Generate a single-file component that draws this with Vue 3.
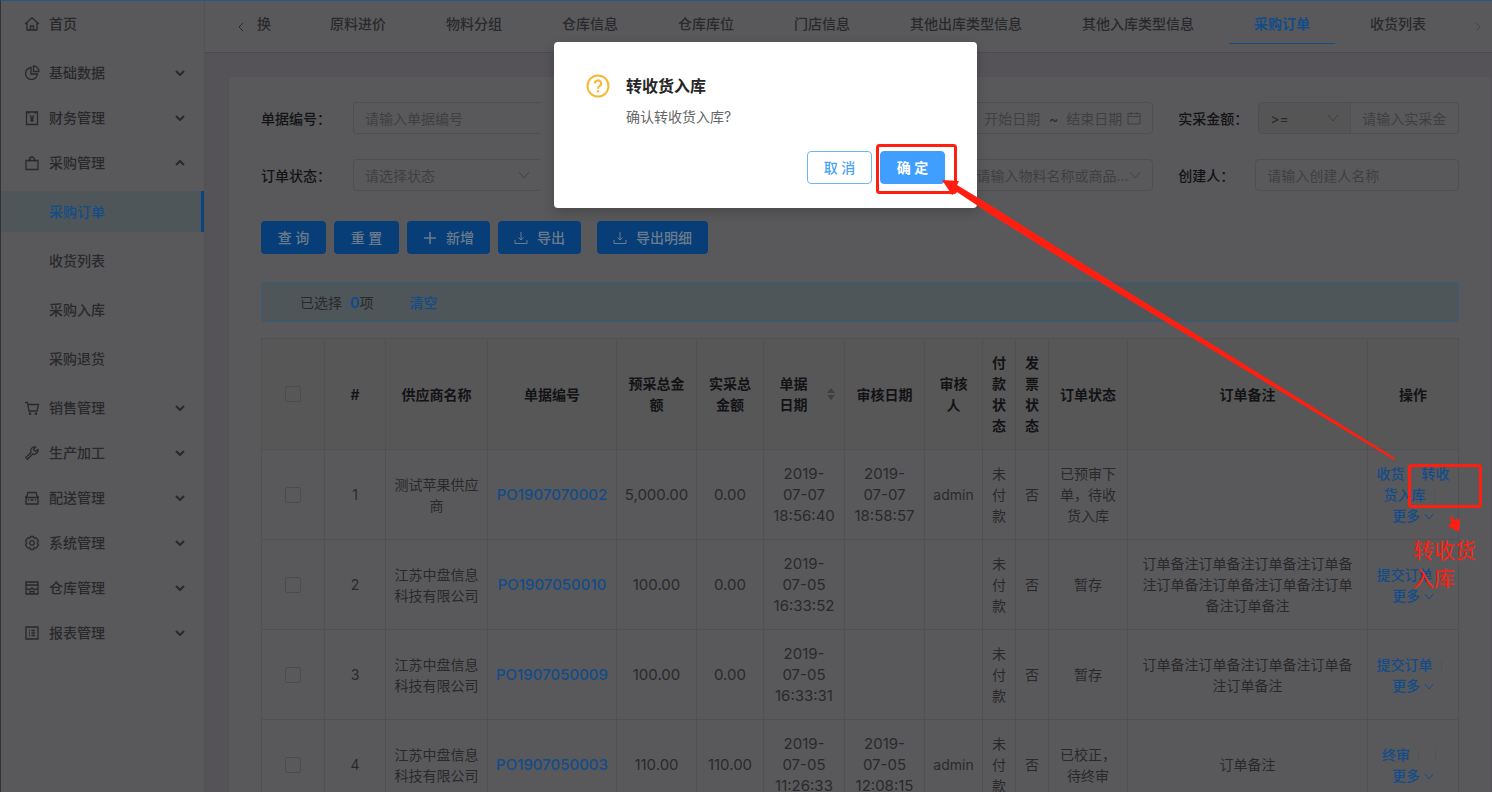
<script setup>
const icons = {
  home: 'M1 8 8 1.8 15 8M3 7v7h10V7M6.500 14v-4h3v4',
  pie: 'M7 2.500A6 6 0 1 0 13.500 9H7zM9.500 1v5.500H15A5.500 5.500 0 0 0 9.500 1z',
  book: 'M2.500 2h11v12.500h-11zM4.500 2v2M11.500 2v2M6 5.500l2 2.500 2-2.500M8 8v4M6.300 8.600h3.400M6.300 10.400h3.400',
  bag: 'M2 5.500h12v9H2zM5.500 7V4.500a2.500 2.500 0 0 1 5 0V7',
  cart: 'M1 2.500h2.500L5 11h8l1.500-6.500H4M5.500 13.200h1v1h-1zM11.500 13.200h1v1h-1z',
  tool: 'M14 4.500 11.500 6.500 9.500 4.500 11.500 2A4 4 0 0 0 7 7.500L1.800 12.500 3.500 14.300 8.700 9A4 4 0 0 0 14 4.500z',
  car: 'M1 7h1.500M13.500 7H15M2.500 7.500 4 2.500h8l1.500 5M2 7.500h12V14H2zM4 10h1M11 10h1M6.500 10h3',
  gear: 'M6.500 1.500h3L10.200 3.300 12.300 2.900 14.500 6 13.300 8 14.500 10 12.300 13.100 10.200 12.700 9.500 14.500h-3L5.800 12.700 3.700 13.100 1.500 10 2.700 8 1.500 6 3.700 2.900 5.800 3.300zM8 5.700a2.300 2.300 0 1 0 .01 0z',
  store: 'M2 2h12v12H2zM2 5h12M2 8c1.500 2 4.500 2 6 0 1.500 2 4.500 2 6 0M6 14v-2.500h4V14',
  list: 'M2 2h12v12H2zM5 5.500h1M7.500 5.500H11M5 8h1M7.500 8H11M5 10.500h1M7.500 10.500H11'
}

const menu = [
  { text: '首页', icon: 'home', home: true },
  { text: '基础数据', icon: 'pie', group: true },
  { text: '财务管理', icon: 'book', group: true },
  {
    text: '采购管理', icon: 'bag', group: true, open: true,
    children: ['采购订单', '收货列表', '采购入库', '采购退货']
  },
  { text: '销售管理', icon: 'cart', group: true },
  { text: '生产加工', icon: 'tool', group: true },
  { text: '配送管理', icon: 'car', group: true },
  { text: '系统管理', icon: 'gear', group: true },
  { text: '仓库管理', icon: 'store', group: true },
  { text: '报表管理', icon: 'list', group: true }
]

const tabs = ['换', '原料进价', '物料分组', '仓库信息', '仓库库位', '门店信息', '其他出库类型信息', '其他入库类型信息', '采购订单', '收货列表']

const columns = [
  { key: 'check' },
  { key: 'index', title: '#' },
  { key: 'supplier', title: '供应商名称' },
  { key: 'code', title: '单据编号' },
  { key: 'plan', title: '预采总金额' },
  { key: 'actual', title: '实采总金额' },
  { key: 'date', title: '单据\n日期', sortable: true },
  { key: 'audit', title: '审核日期' },
  { key: 'auditor', title: '审核人' },
  { key: 'paid', title: '付款状态' },
  { key: 'invoice', title: '发票状态' },
  { key: 'status', title: '订单状态' },
  { key: 'remark', title: '订单备注' },
  { key: 'ops', title: '操作' }
]

const rows = [
  { index: 1, supplier: '测试苹果供应商', code: 'PO1907070002', plan: '5,000.00', actual: '0.00', date: '2019-\n07-07\n18:56:40', audit: '2019-\n07-07\n18:58:57', auditor: 'admin', paid: '未付款', invoice: '否', status: '已预审下单，待收货入库', remark: '', ops: ['收货', '转收货入库'] },
  { index: 2, supplier: '江苏中盘信息科技有限公司', code: 'PO1907050010', plan: '100.00', actual: '0.00', date: '2019-\n07-05\n16:33:52', audit: '', auditor: '', paid: '未付款', invoice: '否', status: '暂存', remark: '订单备注'.repeat(9), ops: ['提交订单'] },
  { index: 3, supplier: '江苏中盘信息科技有限公司', code: 'PO1907050009', plan: '100.00', actual: '0.00', date: '2019-\n07-05\n16:33:31', audit: '', auditor: '', paid: '未付款', invoice: '否', status: '暂存', remark: '订单备注'.repeat(5), ops: ['提交订单'] },
  { index: 4, supplier: '江苏中盘信息科技有限公司', code: 'PO1907050003', plan: '110.00', actual: '110.00', date: '2019-\n07-05\n11:26:33', audit: '2019-\n07-05\n12:08:15', auditor: 'admin', paid: '未付款', invoice: '否', status: '已校正，待终审', remark: '订单备注', ops: ['终审', ''] }
]
const plainKeys = ['plan', 'actual', 'date', 'audit', 'auditor', 'paid', 'invoice', 'status', 'remark']
const numeric = new Set(['plan', 'actual', 'date', 'audit'])
</script>

<template>
  <div class="app">
    <nav class="sidebar">
      <template v-for="item in menu" :key="item.text">
        <a v-if="!item.group" href="#" class="item home">
          <svg class="ico" viewBox="0 0 16 16"><path :d="icons[item.icon]" /></svg>
          <span>{{ item.text }}</span>
        </a>
        <button v-else type="button" class="item" :aria-expanded="!!item.open">
          <svg class="ico" viewBox="0 0 16 16"><path :d="icons[item.icon]" /></svg>
          <span>{{ item.text }}</span>
          <svg class="fold" :class="{ up: item.open }" viewBox="0 0 10 6"><path d="M1 1l4 4 4-4" /></svg>
        </button>
        <div v-if="item.children" class="submenu">
          <a v-for="(child, i) in item.children" :key="child" href="#" class="subitem" :class="{ active: i === 0 }">{{ child }}</a>
        </div>
      </template>
    </nav>

    <div class="main">
      <div class="tabbar">
        <button type="button" class="pager"><svg viewBox="0 0 6 10"><path d="M5 1 1 5l4 4" /></svg></button>
        <div class="tabs">
          <a v-for="(t, i) in tabs" :key="t" href="#" class="tab" :class="{ first: i === 0, current: t === '采购订单' }">{{ t }}</a>
        </div>
        <button type="button" class="pager end"><svg viewBox="0 0 6 10"><path d="M1 1l4 4-4 4" /></svg></button>
      </div>

      <div class="card">
        <form class="filters" @submit.prevent>
          <div class="field c1">
            <label for="code">单据编号：</label>
            <input id="code" class="ctl cut" type="text" placeholder="请输入单据编号">
          </div>
          <div class="field c3">
            <div class="ctl range">
              <input type="text" placeholder="开始日期" aria-label="开始日期">
              <span>~</span>
              <input type="text" placeholder="结束日期" aria-label="结束日期">
              <svg class="cal" viewBox="0 0 14 14"><path d="M1 2.500h12v10.500H1zM1 5.500h12M4 1v3M10 1v3" /></svg>
            </div>
          </div>
          <div class="field c4">
            <label for="amount" class="mid">实采金额：</label>
            <div class="pick op">
              <select class="ctl" aria-label="实采金额"><option>&gt;=</option></select>
              <svg class="down" viewBox="0 0 12 8"><path d="M1 1l5 6 5-6" /></svg>
            </div>
            <input id="amount" class="ctl joined" type="text" placeholder="请输入实采金额">
          </div>
          <div class="field c1">
            <label for="status">订单状态：</label>
            <div class="pick">
              <select id="status" class="ctl cut"><option>请选择状态</option></select>
              <svg class="down" viewBox="0 0 12 8"><path d="M1 1l5 6 5-6" /></svg>
            </div>
          </div>
          <div class="field c3">
            <div class="pick">
              <select class="ctl" aria-label="物料名称"><option>请输入物料名称或商品...</option></select>
              <svg class="down" viewBox="0 0 12 8"><path d="M1 1l5 6 5-6" /></svg>
            </div>
          </div>
          <div class="field c4">
            <label for="creator" class="short">创建人：</label>
            <input id="creator" class="ctl" type="text" placeholder="请输入创建人名称">
          </div>
        </form>

        <div class="actions">
          <button type="button" class="btn">查 询</button>
          <button type="button" class="btn">重 置</button>
          <button type="button" class="btn">
            <svg viewBox="0 0 14 14"><path class="bold" d="M7 1v12M1 7h12" /></svg>新增
          </button>
          <button type="button" class="btn">
            <svg viewBox="0 0 14 14"><path d="M7 1v8M4.500 6.500 7 9l2.500-2.500M1 9v3.500h12V9" /></svg>导出
          </button>
          <button type="button" class="btn apart">
            <svg viewBox="0 0 14 14"><path d="M7 1v8M4.500 6.500 7 9l2.500-2.500M1 9v3.500h12V9" /></svg>导出明细
          </button>
        </div>

        <div class="notice">
          <span>已选择</span><b>0</b><span>项</span><a href="#">清空</a>
        </div>

        <table>
          <colgroup><col v-for="c in columns" :key="c.key" :class="'w-' + c.key"></colgroup>
          <thead>
            <tr>
              <th v-for="c in columns" :key="c.key">
                <input v-if="c.key === 'check'" type="checkbox" aria-label="#">
                <span v-else-if="c.sortable" class="sort">
                  <span>{{ c.title }}</span>
                  <svg viewBox="0 0 8 12"><path d="M4 0l4 5H0zM4 12l4-5H0z" /></svg>
                </span>
                <template v-else>{{ c.title }}</template>
              </th>
            </tr>
          </thead>
          <tbody>
            <tr v-for="r in rows" :key="r.index">
              <td><input type="checkbox" :aria-label="r.code"></td>
              <td>{{ r.index }}</td>
              <td>{{ r.supplier }}</td>
              <td class="num"><a href="#">{{ r.code }}</a></td>
              <td v-for="k in plainKeys" :key="k" :class="{ num: numeric.has(k) }">{{ r[k] }}</td>
              <td class="ops">
                <template v-for="(o, i) in r.ops" :key="i"><a v-if="o" href="#">{{ o }}</a><i></i></template>
                <div><a href="#">更多 <svg viewBox="0 0 10 8"><path d="M1 1l4 5 4-5" /></svg></a></div>
              </td>
            </tr>
          </tbody>
        </table>
      </div>
    </div>

    <div class="dialog" role="dialog" aria-labelledby="dialog-title">
      <svg class="ask" viewBox="0 0 24 24">
        <circle cx="12" cy="12" r="10.500" />
        <path d="M8.800 9.500a3.200 3 0 1 1 4.600 2.600c-.9.500-1.400 1-1.400 2.200v.4" />
        <circle class="dot" cx="12" cy="17.300" r="1.200" />
      </svg>
      <div class="content">
        <h2 id="dialog-title">转收货入库</h2>
        <p>确认转收货入库?</p>
        <div class="choices">
          <button type="button">取 消</button>
          <button type="button" class="ok">确 定</button>
        </div>
      </div>
    </div>

    <svg class="marks" width="1492" height="792" viewBox="0 0 1492 792">
      <rect x="877.500" y="145.500" width="78" height="47" rx="2" />
      <rect x="1409.500" y="465.500" width="71" height="41" rx="2" />
      <path d="M942 180 959 181 957 185 990 205 1093 270 1395 458 1394 460 1080 270 990 214 957 192 952 195z" />
      <path d="M1451 515 1455 520 1460 519 1459 532 1448 526 1451 523z" />
    </svg>
    <div class="caption">转收货<br>入库</div>
  </div>
</template>

<style>
body { overflow: hidden; }
</style>

<style scoped>
* { box-sizing: border-box; }
.app {
  --paper: #59595b;
  --line: #4f4f51;
  --ink: #29292b;
  --strong: #131316;
  --hint: #3f3f41;
  --blue: #124c89;
  position: relative;
  display: flex;
  height: 100vh;
  overflow: hidden;
  border-top: 1px solid #2b5683;
  border-left: 1px solid #333335;
  background: #555358;
  color: var(--ink);
  font: 14px/21px Inter, "Noto Sans CJK SC", sans-serif;
}
a { color: inherit; text-decoration: none; }
button, input, select { font: inherit; color: inherit; margin: 0; }
svg { fill: none; stroke: currentColor; flex: none; }

.sidebar {
  width: 204px;
  flex: none;
  display: flex;
  flex-direction: column;
  gap: 4px;
  padding-top: 2px;
  background: var(--paper);
  border-right: 1px solid #525254;
  font-weight: 500;
}
.item {
  display: flex;
  align-items: center;
  gap: 9px;
  height: 41px;
  flex: none;
  padding: 0 19px 0 23px;
  border: 0;
  background: none;
  text-align: left;
}
.home { margin-bottom: 4px; }
.ico { width: 16px; height: 16px; stroke-width: 1.3; }
.fold { width: 10px; height: 6px; margin-left: auto; stroke-width: 2; }
.fold.up { transform: rotate(180deg); }
.submenu { display: flex; flex-direction: column; gap: 8px; padding: 4px 0; }
.subitem { height: 41px; line-height: 41px; padding-left: 48px; }
.subitem.active { background: #4f5659; color: var(--blue); border-right: 3px solid #0b457f; }

.main { flex: 1; min-width: 0; }
.tabbar {
  display: flex;
  height: 52px;
  background: var(--paper);
  border-bottom: 1px solid #4b4b4d;
}
.pager {
  width: 52px;
  padding: 0 0 0 20px;
  height: 50px;
  border: 0;
  background: none;
}
.pager svg { width: 6px; height: 10px; }
.pager.end { width: 28px; padding: 0; color: #454547; }
.tabs { flex: 1; display: flex; gap: 10px; min-width: 0; overflow: hidden; font-weight: 500; }
.tab { flex: none; height: 43px; line-height: 45px; padding: 0 25px; white-space: nowrap; }
.tab.first { padding: 0 24px 0 0; }
.tab.current { color: var(--blue); font-weight: 700; border-bottom: 1px solid #124c89; }

.card {
  margin: 24px 1px 0 24px;
  padding: 25px 32px;
  background: var(--paper);
  border-radius: 2px;
}
.filters { display: grid; grid-template-columns: repeat(4, minmax(0, 1fr)); gap: 25px; }
.field { display: flex; align-items: center; min-width: 0; }
.c1 { grid-column: 1; }
.c3 { grid-column: 3; padding-left: 92px; }
.c4 { grid-column: 4; }
label { width: 92px; flex: none; color: var(--strong); font-weight: 500; }
label.mid { width: 80px; }
label.short { width: 77px; }
.ctl {
  width: 100%;
  min-width: 0;
  height: 32px;
  flex: 1;
  padding: 0 11px;
  border: 1px solid var(--line);
  border-radius: 4px;
  background: none;
  color: var(--hint);
  outline: 0;
}
.cut { border-right-color: transparent; }
input::placeholder { color: var(--hint); opacity: 1; }
select.ctl { appearance: none; padding-right: 20px; }
.pick { position: relative; flex: 1; min-width: 0; display: flex; }
.down { position: absolute; right: 12px; top: 12px; width: 12px; height: 8px; color: #414143; }
.op { flex: none; width: 93px; }
.op .ctl { background: #555556; color: var(--ink); border-radius: 4px 0 0 4px; }
.joined { border-left: 0; border-radius: 0 4px 4px 0; }
.range { display: flex; align-items: center; justify-content: flex-end; }
.range input { width: 57px; padding: 0; border: 0; background: none; flex: none; }
.range span { width: 25px; text-align: center; flex: none; color: var(--ink); }
.cal { width: 14px; height: 14px; margin-left: 4px; }

.actions { display: flex; gap: 8px; margin-top: 30px; }
.btn {
  display: flex;
  align-items: center;
  justify-content: center;
  gap: 9px;
  height: 33px;
  min-width: 65px;
  padding: 0 16px;
  border: 0;
  border-radius: 4px;
  background: #073e77;
  color: #6b7b8c;
  font-weight: 500;
}
.btn svg { width: 14px; height: 14px; }
.bold { stroke-width: 1.600; }
.apart { margin-left: 8px; }

.notice {
  display: flex;
  align-items: center;
  height: 40px;
  margin: 28px 0 16px;
  padding: 0 38px;
  border: 1px solid #365c78;
  border-radius: 4px;
  background: #4f5659;
}
.notice b { margin-left: 8px; color: var(--blue); }
.notice a { margin-left: 36px; color: var(--blue); font-weight: 500; }

table {
  --line: #515153;
  width: 100%;
  table-layout: fixed;
  border-collapse: separate;
  border-spacing: 0;
  border-top: 1px solid var(--line);
  border-left: 1px solid var(--line);
}
.w-check { width: 63px; }
.w-index { width: 61px; }
.w-supplier { width: 102px; }
.w-code { width: 129px; }
.w-plan { width: 80px; }
.w-actual { width: 67px; }
.w-date { width: 81px; }
.w-audit { width: 80px; }
.w-auditor { width: 58px; }
.w-paid { width: 33px; }
.w-invoice { width: 33px; }
.w-status { width: 79px; }
.w-ops { width: 91px; }
th, td {
  padding: 13px 8px;
  border-right: 1px solid var(--line);
  border-bottom: 1px solid var(--line);
  text-align: center;
  vertical-align: middle;
  white-space: pre-line;
}
th { background: #575758; color: var(--strong); font-weight: 600; }
.num { padding-left: 4px; padding-right: 4px; font-size: 15px; }
td a { color: var(--blue); font-weight: 500; }
input[type="checkbox"] {
  appearance: none;
  display: block;
  width: 16px;
  height: 16px;
  margin: 0 auto;
  border: 1px solid #4c4c4f;
  border-radius: 2px;
}
.sort { display: inline-flex; align-items: center; gap: 19px; margin-right: -6px; }
.sort svg { width: 8px; height: 12px; fill: #3f3f42; stroke: none; }
.ops { white-space: normal; }
.ops i {
  display: inline-block;
  width: 1px;
  height: 13px;
  margin: 0 8px;
  background: #545456;
  vertical-align: middle;
}
.ops svg { width: 10px; height: 8px; }

.dialog {
  position: absolute;
  left: 553px;
  top: 41px;
  width: 423px;
  display: flex;
  gap: 16px;
  padding: 32px 32px 24px;
  border-radius: 4px;
  background: #fff;
  box-shadow: 0 4px 12px rgba(0, 0, 0, .2);
}
.ask { width: 24px; height: 24px; color: #f8b735; stroke-width: 2; }
.dot { fill: currentColor; stroke: none; }
.content { flex: 1; }
h2 { margin: 0; font-size: 16px; line-height: 24px; font-weight: 600; color: #262626; }
p { margin: 8px 0 24px; color: #666; }
.choices { display: flex; justify-content: flex-end; gap: 8px; }
.choices button {
  width: 65px;
  height: 33px;
  padding: 0;
  border: 1px solid #6db4fb;
  border-radius: 4px;
  background: #fff;
  color: #4aa3f5;
  font-weight: 500;
}
.choices .ok { background: #409eff; border-color: #409eff; color: #fff; font-weight: 700; }

.marks { position: absolute; left: -1px; top: -1px; pointer-events: none; }
.marks rect { stroke: #ff1f10; stroke-width: 3; }
.marks path { fill: #ff1f10; stroke: none; }
.caption {
  position: absolute;
  left: 1412px;
  top: 536px;
  color: #ff1f10;
  font-size: 21px;
  line-height: 28px;
  font-weight: 400;
}
</style>
